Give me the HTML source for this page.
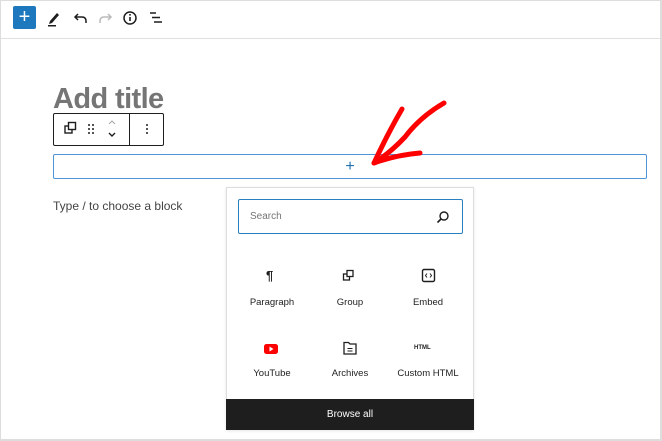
<!DOCTYPE html>
<html><head><style>
*{margin:0;padding:0;box-sizing:border-box}
body{width:662px;height:441px;overflow:hidden;background:#fff;font-family:"Liberation Sans",sans-serif;position:relative}
.frame{position:absolute;left:0;top:0;width:662px;height:441px;border:1px solid #ddd;border-width:1px 2px 2px 1px}
.hdr{position:absolute;left:1px;top:38px;width:659px;height:1px;background:#e0e0e0}
.abs{position:absolute}
.lbl{position:absolute;font-size:9.5px;color:#1e1e1e;text-align:center;width:80px}
</style></head><body>
<div class="frame"></div>
<div class="hdr"></div>
<div class="abs" style="left:13px;top:6px;width:23px;height:23px;background:#1e78bd;border-radius:2px;color:#fff;font-size:20px;line-height:22px;text-align:center">+</div>
<svg class="abs" style="left:44px;top:6px" width="150" height="24" viewBox="0 0 150 24">
<path d="M6 15 L13 7 L15 9 L8 17 L5 18 Z" fill="#1e1e1e"/><rect x="4" y="19" width="8" height="1.5" fill="#1e1e1e"/>
<path d="M34 8 L31 11 L34 14 M31 11 H38 Q42 11 42 15 V17" fill="none" stroke="#1e1e1e" stroke-width="1.5"/>
<path d="M64 8 L67 11 L64 14 M67 11 H60 Q56 11 56 15 V17" fill="none" stroke="#bbb" stroke-width="1.5"/>
<circle cx="86" cy="12" r="6" fill="none" stroke="#1e1e1e" stroke-width="1.5"/><rect x="85.2" y="11" width="1.6" height="4" fill="#1e1e1e"/><rect x="85.2" y="8" width="1.6" height="1.6" fill="#1e1e1e"/>
<path d="M106 7 H112 M108 11.5 H116 M110 16 H118" stroke="#1e1e1e" stroke-width="1.5"/>
</svg>
<div class="abs" style="left:53px;top:83px;font-size:29px;font-weight:bold;color:#757575;letter-spacing:-0.6px">Add title</div>
<div class="abs" style="left:53px;top:113px;width:111px;height:33px;border:1px solid #1e1e1e;border-radius:2px;background:#fff"></div>
<div class="abs" style="left:129px;top:113px;width:1px;height:33px;background:#1e1e1e"></div>
<svg class="abs" style="left:53px;top:113px" width="111" height="33">
<rect x="12" y="13" width="7" height="7" fill="none" stroke="#1e1e1e" stroke-width="1.4"/><rect x="15.5" y="9.5" width="7" height="7" fill="#fff" stroke="#1e1e1e" stroke-width="1.4"/>
<g fill="#1e1e1e"><circle cx="36" cy="12" r="1"/><circle cx="40" cy="12" r="1"/><circle cx="36" cy="16" r="1"/><circle cx="40" cy="16" r="1"/><circle cx="36" cy="20" r="1"/><circle cx="40" cy="20" r="1"/><circle cx="94" cy="12" r="1"/><circle cx="94" cy="16" r="1"/><circle cx="94" cy="20" r="1"/></g>
<path d="M56 11 L59 8 L62 11" fill="none" stroke="#aaa" stroke-width="1.1"/><path d="M56 20 L59 23 L62 20" fill="none" stroke="#1e1e1e" stroke-width="1.4"/>
</svg>
<div class="abs" style="left:53px;top:154px;width:594px;height:25px;border:1px solid #4f94d4;border-radius:2px;color:#2271b1;font-size:16px;text-align:center;line-height:23px">+</div>
<div class="abs" style="left:53px;top:199px;font-size:12px;color:#444">Type / to choose a block</div>
<svg class="abs" style="left:360px;top:95px" width="100" height="80">
<path d="M84 8 Q60 22 45 42 Q30 58 14 68" fill="none" stroke="#f00" stroke-width="5" stroke-linecap="round"/>
<path d="M42 14 Q28 38 14 68 Q36 60 60 58" fill="none" stroke="#f00" stroke-width="5" stroke-linecap="round" stroke-linejoin="round"/>
</svg>
<div class="abs" style="left:226px;top:187px;width:248px;height:243px;background:#fff;border:1px solid #ddd;box-shadow:0 1px 3px rgba(0,0,0,.1)"></div>
<div class="abs" style="left:238px;top:199px;width:225px;height:35px;border:1px solid #2a7fbf;border-radius:2px;font-size:10px;color:#757575;padding:11px 11px">Search</div>
<svg class="abs" style="left:436px;top:210px" width="14" height="14"><circle cx="8" cy="6" r="4" fill="none" stroke="#1e1e1e" stroke-width="1.4"/><path d="M5 9 L1.5 12.5" stroke="#1e1e1e" stroke-width="1.6"/></svg>
<div class="abs" style="left:266px;top:268px;font-size:13px;font-weight:bold;color:#1e1e1e">¶</div>
<svg class="abs" style="left:342px;top:269px" width="14" height="14"><rect x="1.5" y="5" width="6" height="6" fill="none" stroke="#1e1e1e" stroke-width="1.3"/><rect x="5" y="1.5" width="6" height="6" fill="#fff" stroke="#1e1e1e" stroke-width="1.3"/></svg>
<svg class="abs" style="left:421px;top:268px" width="16" height="16"><rect x="1.5" y="1.5" width="12" height="12" rx="1.5" fill="none" stroke="#1e1e1e" stroke-width="1.4"/><path d="M6 5.5 L4.5 7.5 L6 9.5 M9 5.5 L10.5 7.5 L9 9.5" fill="none" stroke="#1e1e1e" stroke-width="1"/></svg>
<div class="lbl" style="left:232px;top:297px">Paragraph</div>
<div class="lbl" style="left:310px;top:297px">Group</div>
<div class="lbl" style="left:388px;top:297px">Embed</div>
<svg class="abs" style="left:263px;top:343px" width="16" height="12"><rect x="1" y="1" width="14" height="10" rx="2.5" fill="#f00"/><path d="M6.5 3.5 L10.5 6 L6.5 8.5 Z" fill="#fff"/></svg>
<svg class="abs" style="left:342px;top:340px" width="16" height="16"><path d="M2 2.5 H6.5 L8 4 H14 V14 H2 Z" fill="none" stroke="#1e1e1e" stroke-width="1.3"/><path d="M5.5 8.5 H10.5 M5.5 11 H10.5" stroke="#1e1e1e" stroke-width="1"/></svg>
<div class="abs" style="left:414px;top:345px;font-size:6px;font-weight:bold;color:#1e1e1e">HTML</div>
<div class="lbl" style="left:232px;top:368px">YouTube</div>
<div class="lbl" style="left:310px;top:368px">Archives</div>
<div class="lbl" style="left:388px;top:368px">Custom HTML</div>
<div class="abs" style="left:226px;top:399px;width:248px;height:31px;background:#1e1e1e;color:#fff;font-size:10px;text-align:center;line-height:31px">Browse all</div>
</body></html>
